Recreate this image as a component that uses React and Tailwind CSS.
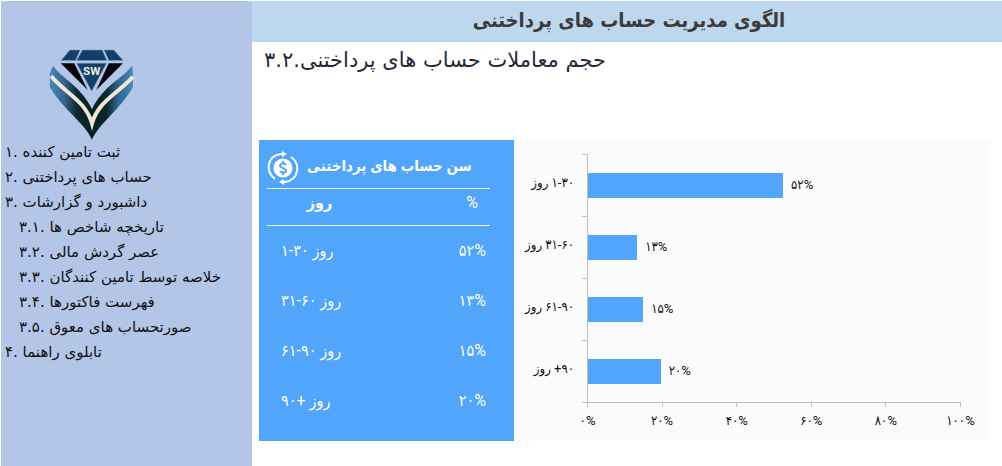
import React from "react";

const menu = [
  { no: "۱.", label: "ثبت تامین کننده" },
  { no: "۲.", label: "حساب های پرداختنی" },
  { no: "۳.", label: "داشبورد و گزارشات" },
  { no: "۳.۱.", label: "تاریخچه شاخص ها", sub: true },
  { no: "۳.۲.", label: "عصر گردش مالی", sub: true },
  { no: "۳.۳.", label: "خلاصه توسط تامین کنندگان", sub: true },
  { no: "۳.۴.", label: "فهرست فاکتورها", sub: true },
  { no: "۳.۵.", label: "صورتحساب های معوق", sub: true },
  { no: "۴.", label: "تابلوی راهنما" },
];

const aging = [
  { days: "۱-۳۰ روز", value: 52.3, percent: "۵۲%" },
  { days: "۳۱-۶۰ روز", value: 13.2, percent: "۱۳%" },
  { days: "۶۱-۹۰ روز", value: 14.8, percent: "۱۵%" },
  { days: "۹۰+ روز", value: 19.5, percent: "۲۰%" },
];

const scale = ["۰%", "۲۰%", "۴۰%", "۶۰%", "۸۰%", "۱۰۰%"];

const Logo = () => (
  <svg width="86" height="91" viewBox="26 28 258 276" role="img" aria-label="SW">
    <defs>
      <linearGradient id="leftWing" x1="26" x2="155" y1="0" y2="0" gradientUnits="userSpaceOnUse">
        <stop offset="0" stopColor="#4489bd" />
        <stop offset="0.35" stopColor="#31678f" />
        <stop offset="0.65" stopColor="#08282f" />
        <stop offset="1" stopColor="#032323" />
      </linearGradient>
      <linearGradient id="rightWing" x1="280" x2="155" y1="0" y2="0" gradientUnits="userSpaceOnUse">
        <stop offset="0" stopColor="#4489bd" />
        <stop offset="0.35" stopColor="#31678f" />
        <stop offset="0.65" stopColor="#08282f" />
        <stop offset="1" stopColor="#032323" />
      </linearGradient>
    </defs>
    <g fill="#11406c" stroke="#8b9eb5" strokeWidth="1.5">
      <path d="M88 31H119L105 63H61Z" />
      <path d="M126 31H186L200 63H108Z" />
      <path d="M192 31H221L250 63H206Z" />
      <path d="M108 71H199L154 156Z" />
    </g>
    <path d="M60 71H101L142 152Z" fill="#06040b" />
    <path d="M206 71H249L168 152Z" fill="#06040b" />
    <path d="M37 79C62 118 122 140 155 211V303C134 254 68 212 27 144V102Z" fill="url(#leftWing)" />
    <path d="M277 79C248 118 188 140 155 211V303C176 254 240 212 279 144V102Z" fill="url(#rightWing)" />
    <path d="M31 110C67 157 136 184 155 254C174 184 242 157 279 112" fill="none" stroke="#f5e6d2" strokeWidth="12" strokeLinejoin="miter" strokeMiterlimit="8" />
    <text x="154" y="106" textAnchor="middle" fontFamily="Roboto, sans-serif" fontSize="35" fontWeight="700" fill="#f4ead9">SW</text>
  </svg>
);

const CycleDollarIcon = () => (
  <svg width="32" height="34" viewBox="0 0 32 34" fill="none" stroke="white" strokeWidth="2" aria-hidden="true">
    <circle cx="16" cy="17" r="9.5" fill="white" stroke="none" />
    <path d="M8 28C-2 20 0 5 14 3H17" />
    <path d="M24 6C34 13 32 29 18 31H15" />
    <path d="M15 0L20 3L15 6ZM17 28L12 31L17 34Z" fill="white" stroke="none" />
    <path d="M19 14C18 12 13 12 13 15C13 17 19 17 19 20C19 22 14 22 13 20M16 10V13M16 21V24" stroke="#51a5fb" />
  </svg>
);

const Sidebar = () => (
  <aside className="w-[251px] shrink-0 bg-[#b4c6e7] pt-12">
    <div className="pl-12">
      <Logo />
    </div>
    <nav>
      <ul className="text-[15px] leading-[25px] text-[#111111]">
        {menu.map((item) => (
          <li key={item.no} className={item.sub ? "pl-[18px]" : "pl-1"}>
            <a href="#">
              {item.no} {item.label}
            </a>
          </li>
        ))}
      </ul>
    </nav>
  </aside>
);

const AgingTable = () => (
  <section className="w-[255px] shrink-0 bg-[#51a5fb] px-2 pt-2 font-['Roboto','DejaVu_Sans_Condensed',sans-serif] text-white">
    <div className="flex h-10 items-center gap-2">
      <CycleDollarIcon />
      <h3 id="aging-title" className="pb-1 text-[15px] font-bold">سن حساب های پرداختنی</h3>
    </div>
    <table aria-labelledby="aging-title" className="w-[223px] table-fixed text-base">
      <thead>
        <tr className="h-[37px] border-y border-white">
          <th className="w-[105px] pb-2 font-bold">روز</th>
          <th className="pr-3 pb-2 text-right font-normal">%</th>
        </tr>
      </thead>
      <tbody>
        {aging.map((row) => (
          <tr key={row.days} className="h-[50px]">
            <td className="pl-3.5 whitespace-nowrap">{row.days}</td>
            <td className="pr-1 text-right">{row.percent}</td>
          </tr>
        ))}
      </tbody>
    </table>
  </section>
);

const AgingChart = () => (
  <section className="min-w-0 flex-1 bg-[#fbfbfb] pt-3.5 pr-7 font-['Roboto','DejaVu_Sans_Condensed',sans-serif] text-[13px] text-[#111111]">
    {aging.map((row) => (
      <div key={row.days} className="flex h-[62px]">
        <div dir="rtl" className="flex w-[68px] items-center pr-2 pb-1 whitespace-nowrap">{row.days}</div>
        <div className="w-[5px] border-t border-[#bfc1c1]" />
        <div className="flex flex-1 items-center gap-2 border-l border-[#bfc1c1]">
          <div className="h-[25px] bg-[#51a5fb]" style={{ width: `${row.value}%` }} />
          <span>{row.percent}</span>
        </div>
      </div>
    ))}
    <div className="ml-[68px] border-t border-[#bfc1c1] pl-[5px]">
      <div className="flex justify-between">
        {scale.map((mark) => (
          <div key={mark} className="flex w-px flex-col items-center gap-1">
            <div className="h-1 w-px bg-[#bfc1c1]" />
            <span>{mark}</span>
          </div>
        ))}
      </div>
    </div>
  </section>
);

export default function App() {
  return (
    <div className="flex min-h-screen bg-white pt-px pl-px font-['DejaVu_Sans',sans-serif]">
      <Sidebar />
      <main className="min-w-0 flex-1">
        <header className="flex h-[41px] items-center justify-center bg-[#bdd7ee] pb-1 pl-1">
          <h1 className="font-['DejaVu_Sans_Condensed',sans-serif] text-xl font-bold text-[#3f3a3a]">الگوی مدیریت حساب های پرداختنی</h1>
        </header>
        <h2 className="h-[98px] px-3 pt-1 text-[21px] leading-7 text-[#1f2937]">۳.۲.حجم معاملات حساب های پرداختنی</h2>
        <div className="flex h-[301px] pr-[13px] pl-[7px]">
          <AgingTable />
          <AgingChart />
        </div>
      </main>
    </div>
  );
}
